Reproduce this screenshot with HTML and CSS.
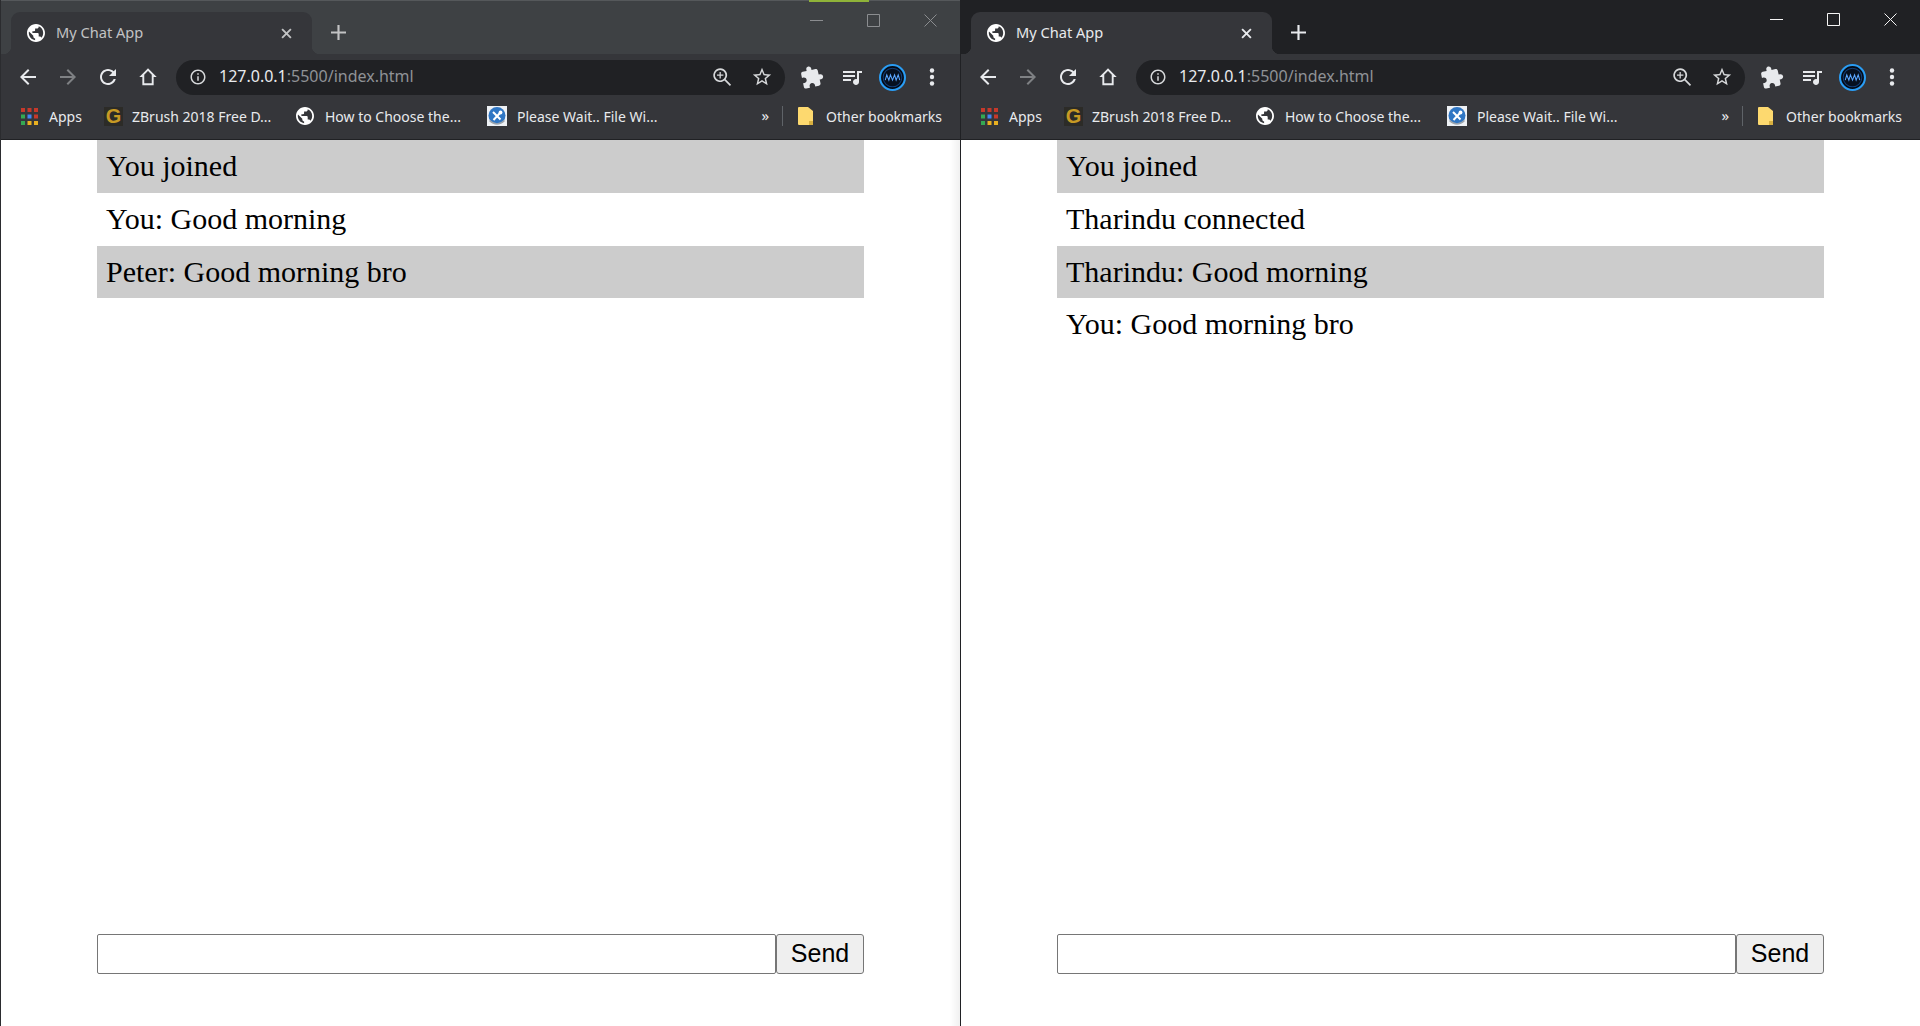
FILE: index.html
```html
<!DOCTYPE html>
<html lang="en">
<head>
<meta charset="utf-8">
<title>My Chat App</title>
<link rel="stylesheet" href="styles.css">
</head>
<body>
<svg class="defs" width="0" height="0" aria-hidden="true">
  <defs>
    <symbol id="i-globe" viewBox="2 2 20 20"><path d="M12 2C6.48 2 2 6.48 2 12s4.48 10 10 10 10-4.48 10-10S17.52 2 12 2zm-1 17.93c-3.95-.49-7-3.85-7-7.93 0-.62.08-1.21.21-1.79L9 15v1c0 1.1.9 2 2 2v1.93zm6.9-2.54c-.26-.81-1-1.39-1.9-1.39h-1v-3c0-.55-.45-1-1-1H8v-2h2c.55 0 1-.45 1-1V7h2c1.1 0 2-.9 2-2v-.41c2.93 1.19 5 4.06 5 7.41 0 2.08-.8 3.97-2.1 5.39z"/></symbol>
    <symbol id="i-back" viewBox="0 0 24 24"><path d="M20 11H7.83l5.59-5.59L12 4l-8 8 8 8 1.41-1.41L7.83 13H20v-2z"/></symbol>
    <symbol id="i-forward" viewBox="0 0 24 24"><path d="M4 11h12.17l-5.59-5.59L12 4l8 8-8 8-1.41-1.41L16.17 13H4v-2z"/></symbol>
    <symbol id="i-reload" viewBox="0 0 24 24"><path d="M17.65 6.35C16.2 4.9 14.21 4 12 4c-4.42 0-7.99 3.58-7.99 8s3.57 8 7.99 8c3.73 0 6.84-2.55 7.73-6h-2.08c-.82 2.33-3.04 4-5.65 4-3.31 0-6-2.69-6-6s2.69-6 6-6c1.66 0 3.14.69 4.22 1.78L13 11h7V4l-2.35 2.35z"/></symbol>
    <symbol id="i-home" viewBox="0 0 24 24"><path d="M12 4.6L5.6 11h1.7v8.2h9.4V11h1.7L12 4.6z" fill="none" stroke="currentColor" stroke-width="1.9"/></symbol>
    <symbol id="i-info" viewBox="0 0 24 24"><path d="M11 7h2v2h-2zm0 4h2v6h-2zm1-9C6.48 2 2 6.48 2 12s4.48 10 10 10 10-4.48 10-10S17.52 2 12 2zm0 18c-4.41 0-8-3.59-8-8s3.59-8 8-8 8 3.59 8 8-3.59 8-8 8z"/></symbol>
    <symbol id="i-zoom" viewBox="0 0 24 24"><path d="M10 2.5a7.5 7.5 0 1 0 4.7 13.35l5.9 5.9 1.3-1.3-5.9-5.9A7.5 7.5 0 0 0 10 2.5zm0 1.8a5.7 5.7 0 1 1 0 11.4 5.7 5.7 0 0 1 0-11.4zM9.3 6.5v2.8H6.5v1.4h2.8v2.8h1.4v-2.8h2.8V9.3h-2.8V6.5z"/></symbol>
    <symbol id="i-star" viewBox="0 0 24 24"><path d="M22 9.24l-7.19-.62L12 2 9.19 8.63 2 9.24l5.46 4.73L5.82 21 12 17.27 18.18 21l-1.63-7.03L22 9.24zM12 15.4l-3.76 2.27 1-4.28-3.32-2.88 4.38-.38L12 6.1l1.71 4.04 4.38.38-3.32 2.88 1 4.28L12 15.4z"/></symbol>
    <symbol id="i-puzzle" viewBox="0 0 24 24"><path d="M20.5 11H19V7c0-1.1-.9-2-2-2h-4V3.5C13 2.12 11.88 1 10.5 1S8 2.12 8 3.5V5H4c-1.1 0-1.99.9-1.99 2v3.8H3.5c1.49 0 2.7 1.21 2.7 2.7s-1.21 2.7-2.7 2.7H2V20c0 1.1.9 2 2 2h3.8v-1.5c0-1.49 1.21-2.7 2.7-2.7 1.49 0 2.7 1.21 2.7 2.7V22H17c1.1 0 2-.9 2-2v-4h1.5c1.38 0 2.5-1.12 2.5-2.5S21.88 11 20.5 11z" transform="rotate(-12 12 12)"/></symbol>
    <symbol id="i-queue" viewBox="0 0 24 24"><path d="M15 6H3v2h12V6zm0 4H3v2h12v-2zM3 16h8v-2H3v2zM17 6v8.18c-.31-.11-.65-.18-1-.18-1.66 0-3 1.34-3 3s1.34 3 3 3 3-1.34 3-3V8h3V6h-5z"/></symbol>
    <symbol id="i-avatar" viewBox="0 0 26 26"><circle cx="13" cy="13" r="12" fill="#050a14" stroke="#2a9df4" stroke-width="2"/><circle cx="13" cy="13" r="9" fill="#06101f" stroke="#123f78" stroke-width="1"/><path d="M6 15.5l1.5-5 2 5 1.5-5 2 5 2-5 1.5 5 2-5 1.5 5" fill="none" stroke="#5aa6ff" stroke-width="1"/></symbol>
    <symbol id="i-dots" viewBox="0 0 24 24"><circle cx="12" cy="5.5" r="2.2"/><circle cx="12" cy="12" r="2.2"/><circle cx="12" cy="18.5" r="2.2"/></symbol>
    <symbol id="i-apps" viewBox="0 0 17 17"><rect width="4" height="4" fill="#c5392b"/><rect x="6.5" width="4" height="4" fill="#c5392b"/><rect x="13" width="4" height="4" fill="#c5392b"/><rect y="6.5" width="4" height="4" fill="#34a853"/><rect x="6.5" y="6.5" width="4" height="4" fill="#4285f4"/><rect x="13" y="6.5" width="4" height="4" fill="#c5392b"/><rect y="13" width="4" height="4" fill="#34a853"/><rect x="6.5" y="13" width="4" height="4" fill="#e8b021"/><rect x="13" y="13" width="4" height="4" fill="#e8b021"/></symbol>
    <symbol id="i-wait" viewBox="0 0 20 20"><rect width="20" height="20" fill="#eef1f5"/><circle cx="10" cy="9.5" r="8.5" fill="#2f76c4"/><path d="M6.5 14L13 7M6 6l7.5 7.5" stroke="#fff" stroke-width="2"/><circle cx="13.5" cy="6.5" r="1.9" fill="#fff"/><path d="M2.5 14.5q7.5 7 15 0" fill="none" stroke="#9aa3ad" stroke-width="1.6"/></symbol>
    <symbol id="i-folder" viewBox="0 0 15 18"><path d="M1 0h9l5 4v13a1 1 0 0 1-1 1H1a1 1 0 0 1-1-1V1a1 1 0 0 1 1-1z" fill="#fdd96f"/><path d="M11 14h4v3a1 1 0 0 1-1 1h-3z" fill="#d9b03f"/></symbol>
    <symbol id="i-min" viewBox="0 0 13 13"><path d="M0 6.5h13" fill="none" stroke="currentColor"/></symbol>
    <symbol id="i-max" viewBox="0 0 13 13"><path d="M.5.5h12v12H.5z" fill="none" stroke="currentColor"/></symbol>
    <symbol id="i-close" viewBox="0 0 13 13"><path d="M.5.5l12 12M12.5.5l-12 12" fill="none" stroke="currentColor"/></symbol>
    <symbol id="i-x" viewBox="0 0 10 10"><path d="M1 1l8 8M9 1L1 9" fill="none" stroke="currentColor" stroke-width="1.7"/></symbol>
    <symbol id="i-plus" viewBox="0 0 14 14"><path d="M7 0v14M0 7h14" fill="none" stroke="currentColor" stroke-width="2"/></symbol>
  </defs>
</svg>

<main class="desktop">
  <section class="window window-inactive">
    <span class="loading-strip"></span>
    <header class="tabstrip">
      <div class="tab">
        <svg class="tab-favicon"><use href="#i-globe"/></svg>
        <span class="tab-title">My Chat App</span>
        <svg class="tab-close"><use href="#i-x"/></svg>
      </div>
      <svg class="new-tab"><use href="#i-plus"/></svg>
      <div class="winctl">
        <span class="winbtn"><svg><use href="#i-min"/></svg></span>
        <span class="winbtn"><svg><use href="#i-max"/></svg></span>
        <span class="winbtn"><svg><use href="#i-close"/></svg></span>
      </div>
    </header>
    <nav class="toolbar">
      <span class="tbtn"><svg><use href="#i-back"/></svg></span>
      <span class="tbtn tbtn-off"><svg><use href="#i-forward"/></svg></span>
      <span class="tbtn"><svg><use href="#i-reload"/></svg></span>
      <span class="tbtn tbtn-home"><svg><use href="#i-home"/></svg></span>
      <div class="omnibox">
        <svg class="omni-info"><use href="#i-info"/></svg>
        <span class="url"><span class="url-host">127.0.0.1</span>:5500/index.html</span>
        <svg class="omni-zoom"><use href="#i-zoom"/></svg>
        <svg class="omni-star"><use href="#i-star"/></svg>
      </div>
      <span class="tbtn tbtn-ext"><svg><use href="#i-puzzle"/></svg></span>
      <span class="tbtn"><svg><use href="#i-queue"/></svg></span>
      <span class="tbtn"><svg class="avatar"><use href="#i-avatar"/></svg></span>
      <span class="tbtn"><svg><use href="#i-dots"/></svg></span>
    </nav>
    <div class="bookmarks">
      <span class="bm bm-apps"><svg class="bm-grid"><use href="#i-apps"/></svg>Apps</span>
      <span class="bm bm-z"><span class="g-icon">G</span>ZBrush 2018 Free D...</span>
      <span class="bm bm-how"><svg class="bm-globe"><use href="#i-globe"/></svg>How to Choose the...</span>
      <span class="bm bm-wait"><svg class="bm-img"><use href="#i-wait"/></svg>Please Wait.. File Wi...</span>
      <span class="bm-more">»</span>
      <span class="bm-sep"></span>
      <span class="bm bm-other"><svg class="bm-folder"><use href="#i-folder"/></svg>Other bookmarks</span>
    </div>
    <div class="page">
      <ul class="messages">
        <li>You joined</li>
        <li>You: Good morning</li>
        <li>Peter: Good morning bro</li>
      </ul>
      <form class="composer">
        <input class="composer-input" type="text">
        <button class="composer-send" type="button">Send</button>
      </form>
    </div>
  </section>

  <section class="window window-active">
    <header class="tabstrip">
      <div class="tab">
        <svg class="tab-favicon"><use href="#i-globe"/></svg>
        <span class="tab-title">My Chat App</span>
        <svg class="tab-close"><use href="#i-x"/></svg>
      </div>
      <svg class="new-tab"><use href="#i-plus"/></svg>
      <div class="winctl">
        <span class="winbtn"><svg><use href="#i-min"/></svg></span>
        <span class="winbtn"><svg><use href="#i-max"/></svg></span>
        <span class="winbtn"><svg><use href="#i-close"/></svg></span>
      </div>
    </header>
    <nav class="toolbar">
      <span class="tbtn"><svg><use href="#i-back"/></svg></span>
      <span class="tbtn tbtn-off"><svg><use href="#i-forward"/></svg></span>
      <span class="tbtn"><svg><use href="#i-reload"/></svg></span>
      <span class="tbtn tbtn-home"><svg><use href="#i-home"/></svg></span>
      <div class="omnibox">
        <svg class="omni-info"><use href="#i-info"/></svg>
        <span class="url"><span class="url-host">127.0.0.1</span>:5500/index.html</span>
        <svg class="omni-zoom"><use href="#i-zoom"/></svg>
        <svg class="omni-star"><use href="#i-star"/></svg>
      </div>
      <span class="tbtn tbtn-ext"><svg><use href="#i-puzzle"/></svg></span>
      <span class="tbtn"><svg><use href="#i-queue"/></svg></span>
      <span class="tbtn"><svg class="avatar"><use href="#i-avatar"/></svg></span>
      <span class="tbtn"><svg><use href="#i-dots"/></svg></span>
    </nav>
    <div class="bookmarks">
      <span class="bm bm-apps"><svg class="bm-grid"><use href="#i-apps"/></svg>Apps</span>
      <span class="bm bm-z"><span class="g-icon">G</span>ZBrush 2018 Free D...</span>
      <span class="bm bm-how"><svg class="bm-globe"><use href="#i-globe"/></svg>How to Choose the...</span>
      <span class="bm bm-wait"><svg class="bm-img"><use href="#i-wait"/></svg>Please Wait.. File Wi...</span>
      <span class="bm-more">»</span>
      <span class="bm-sep"></span>
      <span class="bm bm-other"><svg class="bm-folder"><use href="#i-folder"/></svg>Other bookmarks</span>
    </div>
    <div class="page">
      <ul class="messages">
        <li>You joined</li>
        <li>Tharindu connected</li>
        <li>Tharindu: Good morning</li>
        <li>You: Good morning bro</li>
      </ul>
      <form class="composer">
        <input class="composer-input" type="text">
        <button class="composer-send" type="button">Send</button>
      </form>
    </div>
  </section>
</main>
</body>
</html>
```
FILE: styles.css
```css
* { box-sizing: border-box; }
html, body { margin: 0; height: 100%; overflow: hidden; }
body { background: #fff; font-family: "Liberation Serif", serif; }
.defs { position: absolute; }

.desktop { display: grid; grid-template-columns: 960px 960px; height: 1026px; }

.window {
  position: relative;
  display: flex;
  flex-direction: column;
  height: 1026px;
  border-left: 1px solid #2b2c2f;
  background: #fff;
}
.window-active { border-left: 1.5px solid #202124; }

.loading-strip {
  position: absolute;
  left: 808px;
  top: 0;
  width: 60px;
  height: 2px;
  background: #8fb339;
}

.tabstrip {
  display: flex;
  align-items: flex-start;
  height: 54px;
  padding-top: 12px;
  font-family: "Noto Sans", sans-serif;
}
.window-inactive .tabstrip { background: #3e4144; border-top: 1px solid #55585b; padding-top: 11px; color: #c2c3c4; }
.window-active .tabstrip { background: #202124; color: #e8eaed; }

.tab {
  position: relative;
  display: flex;
  align-items: center;
  width: 301px;
  height: 42px;
  margin-left: 10px;
  padding: 0 11px 0 16px;
  background: #35363a;
  border-radius: 9px 9px 0 0;
}
.tab::before, .tab::after {
  content: "";
  position: absolute;
  bottom: 0;
  width: 8px;
  height: 8px;
}
.window-inactive .tab::before { left: -8px; background: radial-gradient(circle at 0 0, #3e4144 8px, #35363a 8.5px); }
.window-inactive .tab::after { right: -8px; background: radial-gradient(circle at 100% 0, #3e4144 8px, #35363a 8.5px); }
.window-active .tab::before { left: -8px; background: radial-gradient(circle at 0 0, #202124 8px, #35363a 8.5px); }
.window-active .tab::after { right: -8px; background: radial-gradient(circle at 100% 0, #202124 8px, #35363a 8.5px); }

.tab-favicon { width: 18px; height: 18px; fill: #fff; flex: none; }
.tab-title { flex: 1; margin-left: 11px; padding-bottom: 2px; font-size: 14.6px; }
.tab-close { width: 11px; height: 11px; flex: none; margin-right: 9px; }

.new-tab { width: 15px; height: 15px; margin: 13px 0 0 19px; flex: none; }

.winctl { display: flex; margin-left: auto; padding-right: 1px; margin-top: -11px; }
.window-inactive .winctl { color: #8b8d90; margin-top: -10px; }
.window-active .winctl { color: #f5f5f5; }
.winbtn { display: flex; align-items: flex-start; justify-content: center; width: 57px; padding-top: 12px; }
.winbtn svg { width: 13px; height: 13px; display: block; }

.toolbar {
  display: flex;
  align-items: center;
  height: 46px;
  padding: 0 7px;
  background: #35363a;
}
.tbtn { display: flex; align-items: center; justify-content: center; width: 40px; height: 40px; flex: none; fill: #e8eaed; color: #e8eaed; }
.tbtn svg { width: 24px; height: 24px; display: block; }
.tbtn-off { fill: #7f8184; }
.tbtn svg.avatar { width: 27px; height: 27px; }

.omnibox {
  display: flex;
  align-items: center;
  width: 609px;
  height: 35px;
  margin: 0 7px 0 8px;
  padding: 0 12px 0 13px;
  background: #202124;
  border-radius: 18px;
  font-family: "Noto Sans", sans-serif;
  font-size: 16px;
  color: #8f9296;
  fill: #d6d8da;
}
.omni-info { width: 18px; height: 18px; flex: none; }
.url { flex: 1; margin-left: 12px; padding-bottom: 2px; white-space: nowrap; }
.url-host { color: #e8eaed; }
.omni-zoom { width: 22px; height: 22px; flex: none; }
.omni-star { width: 22px; height: 22px; flex: none; margin-left: 18px; }

.bookmarks {
  display: flex;
  align-items: center;
  height: 40px;
  padding: 0 0 4px 20px;
  background: #35363a;
  border-bottom: 1px solid #202124;
  font-family: "Noto Sans", sans-serif;
  font-size: 14px;
  line-height: 19px;
  color: #e8eaed;
}
.bm { display: flex; align-items: center; white-space: nowrap; flex: none; padding-bottom: 3px; }
.bm-apps { width: 83px; }
.bm-z { width: 192px; }
.bm-how { width: 191px; }
.bm-wait { flex: 1; }
.bm-grid { width: 17px; height: 17px; margin-right: 11px; flex: none; }
.g-icon {
  display: flex;
  align-items: center;
  justify-content: center;
  width: 19px;
  height: 19px;
  margin-right: 9px;
  background: #2c2b27;
  color: #c79a24;
  font-family: "Liberation Sans", sans-serif;
  font-size: 20px;
  font-weight: 700;
}
.bm-globe { width: 18px; height: 18px; fill: #fff; margin-right: 11px; flex: none; }
.bm-img { width: 20px; height: 20px; margin-right: 10px; flex: none; }
.bm-more { font-size: 15px; margin-right: 13px; padding-bottom: 5px; flex: none; }
.bm-sep { width: 1px; height: 20px; margin-bottom: 3px; background: #5f6368; flex: none; margin-right: 15px; }
.bm-other { margin-right: 18px; }
.bm-folder { width: 15px; height: 18px; margin-right: 13px; flex: none; }

.page {
  position: relative;
  flex: 1;
  display: flex;
  flex-direction: column;
  justify-content: space-between;
  padding: 0 96px 52px;
  background: #fff;
}
.window-inactive .page::after {
  content: "";
  position: absolute;
  right: 0;
  top: 0;
  bottom: 0;
  width: 10px;
  background: linear-gradient(to right, rgba(0,0,0,0), rgba(0,0,0,.06));
}

.messages { list-style: none; margin: 0; padding: 0; color: #000; font-size: 30px; }
.messages li { height: 52.8px; padding: 0 9px; line-height: 52px; }
.messages li:nth-child(odd) { background: #ccc; }

.composer { display: flex; height: 40px; font-family: "Liberation Sans", sans-serif; }
.composer-input {
  flex: 1;
  min-width: 0;
  height: 40px;
  margin: 0;
  padding: 0 4px;
  background: #fff;
  border: 1px solid #767676;
  border-radius: 2px;
  font: inherit;
}
.composer-send {
  width: 88px;
  height: 40px;
  margin: 0;
  padding: 0 0 2px;
  background: #efefef;
  border: 1px solid #767676;
  border-radius: 3px;
  color: #000;
  font-family: "Liberation Sans", sans-serif;
  font-size: 25px;
}
```
